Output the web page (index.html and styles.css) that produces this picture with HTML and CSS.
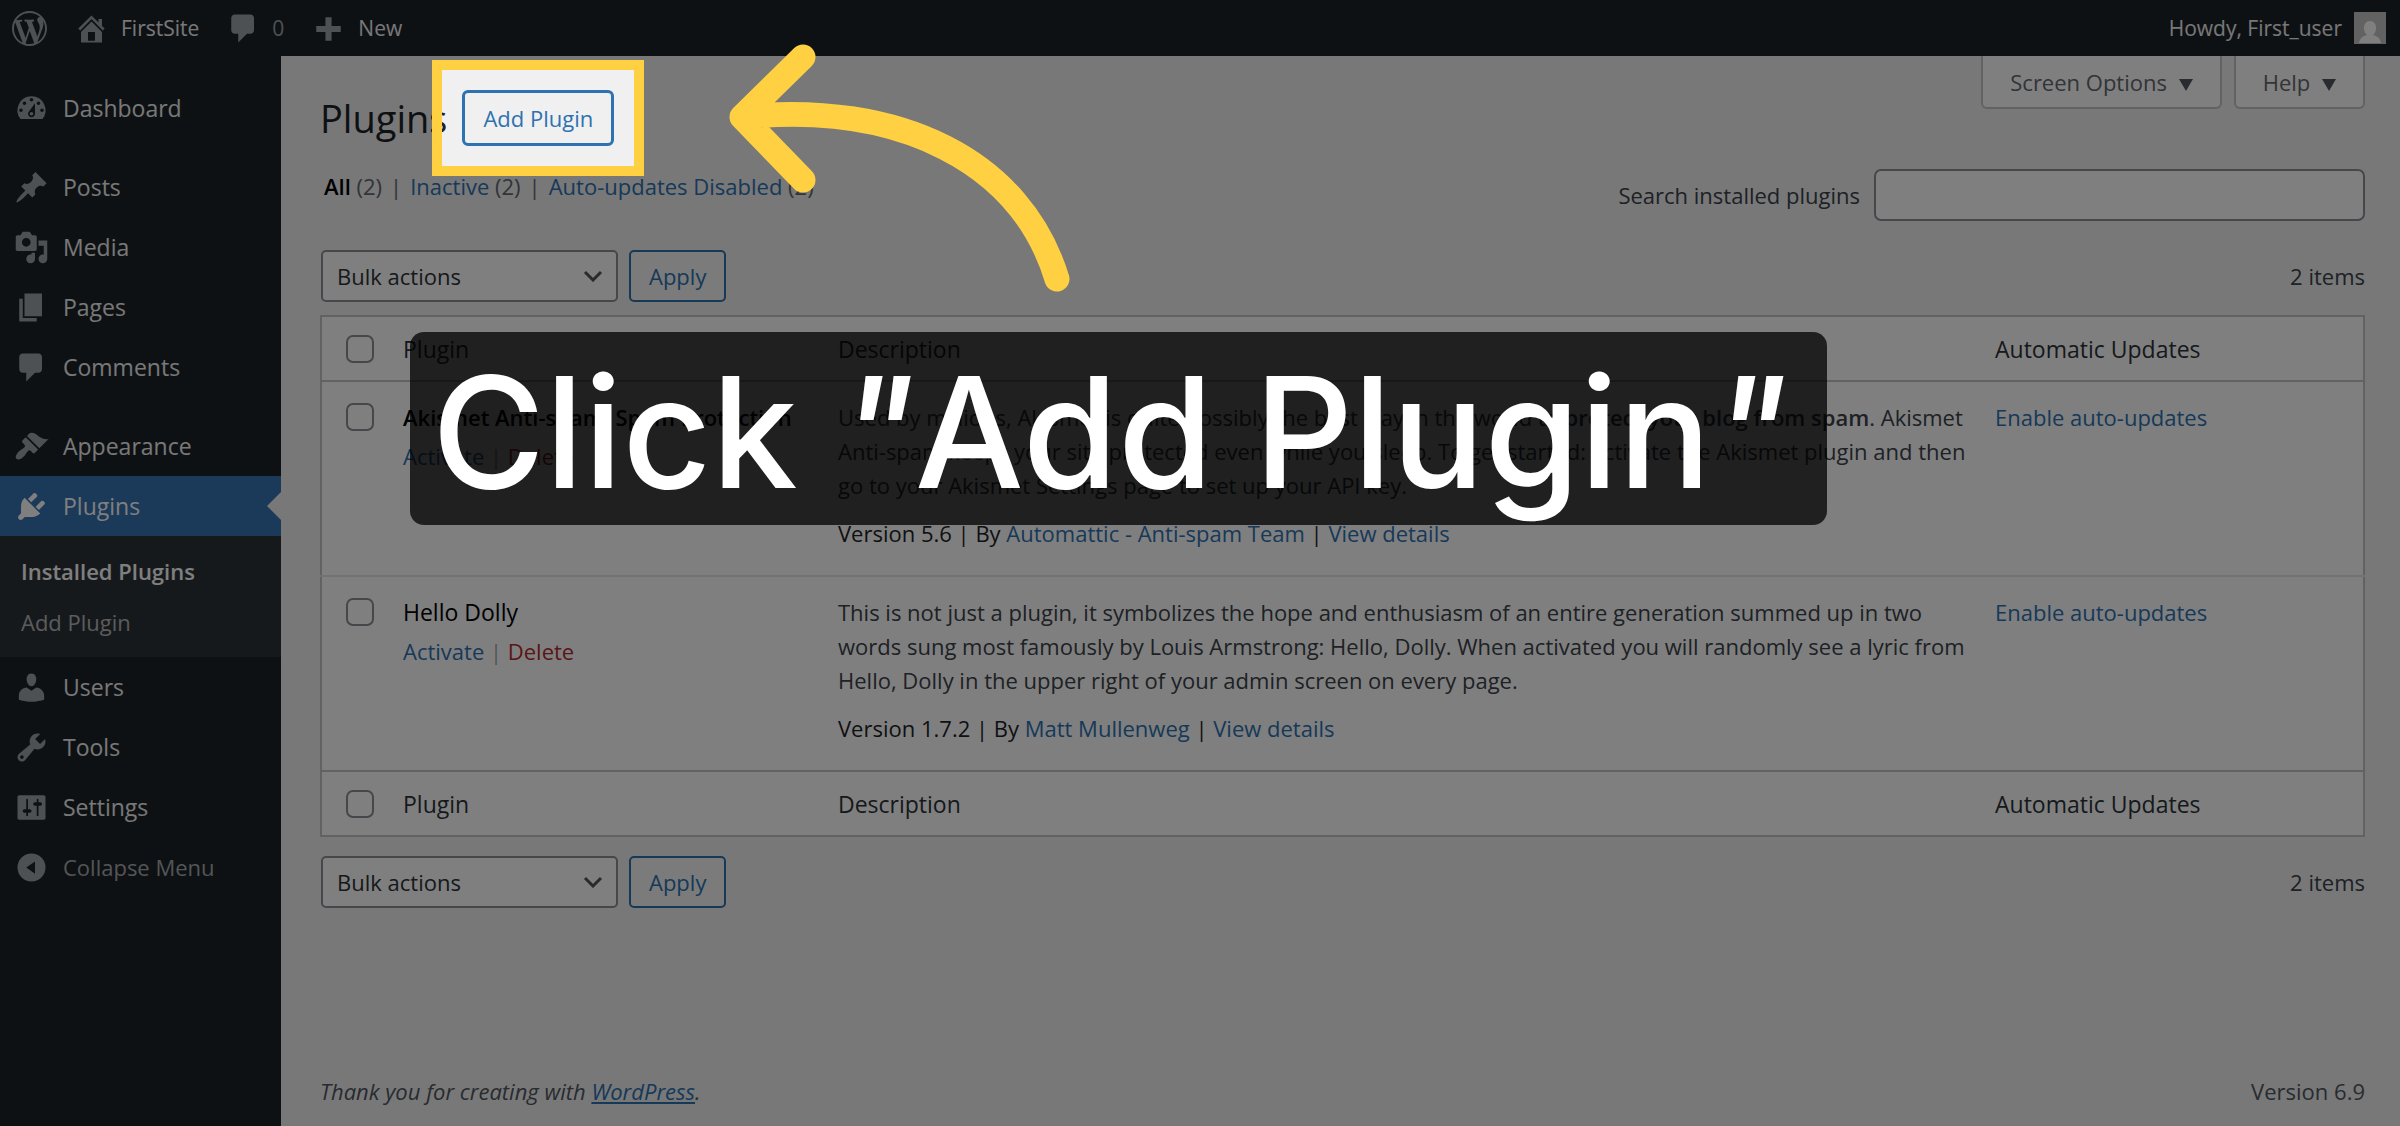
FILE: index.html
```html
<!DOCTYPE html>
<html lang="en">
<head>
    <meta charset="UTF-8">
    <meta name="viewport" content="width=device-width, initial-scale=1.0">
    <title>Plugins - FirstSite</title>
    <link rel="stylesheet" href="styles.css">
</head>
<body>
    <!-- Admin bar -->
    <header class="admin-bar">
        <a class="bar-item bar-logo" href="#" aria-label="About WordPress">
            <svg class="icon" viewBox="0 0 20 20"><path d="M20 10c0-5.51-4.49-10-10-10C4.48 0 0 4.49 0 10c0 5.52 4.48 10 10 10 5.51 0 10-4.48 10-10zM7.78 15.37L4.37 6.22c.55-.02 1.17-.08 1.17-.08.5-.06.44-1.13-.06-1.11 0 0-1.45.11-2.37.11-.18 0-.37 0-.58-.01C4.12 2.69 6.87 1.11 10 1.11c2.33 0 4.45.87 6.05 2.34-.68-.11-1.65.39-1.65 1.58 0 .74.45 1.36.9 2.1.35.61.55 1.36.55 2.46 0 1.49-1.4 5-1.4 5l-3.03-8.37c.54-.02.82-.17.82-.17.5-.05.44-1.25-.06-1.22 0 0-1.44.12-2.38.12-.87 0-2.33-.12-2.33-.12-.5-.03-.56 1.2-.06 1.22l.92.08 1.26 3.41zM17.41 10c.24-.64.74-1.87.43-4.25.7 1.29 1.05 2.71 1.05 4.25 0 3.29-1.73 6.24-4.4 7.78.97-2.59 1.94-5.2 2.92-7.78zM6.1 18.09C3.12 16.65 1.11 13.53 1.11 10c0-1.3.23-2.48.72-3.59C3.25 10.3 4.67 14.2 6.1 18.09zm4.03-6.63l2.58 6.98c-.86.29-1.76.45-2.71.45-.79 0-1.57-.11-2.29-.33.81-2.38 1.62-4.74 2.42-7.1z"/></svg>
        </a>
        <a class="bar-item" href="#">
            <svg class="icon" viewBox="0 0 20 20"><path d="M16 8.5l1.53 1.53-1.06 1.06L10 4.6l-6.47 6.49-1.06-1.06L10 2.5l4 4v-2h2v4zm-6-2.46l6 5.99V18H4v-5.97zM12 17v-5H8v5h4z"/></svg>
            FirstSite
        </a>
        <a class="bar-item bar-comments" href="#">
            <svg class="icon" viewBox="0 0 20 20"><path d="M5 2h9c1.1 0 2 .9 2 2v7c0 1.1-.9 2-2 2h-2l-5 5v-5H5c-1.1 0-2-.9-2-2V4c0-1.1.9-2 2-2z"/></svg>
            <span class="bar-count">0</span>
        </a>
        <a class="bar-item" href="#">
            <svg class="icon" viewBox="0 0 20 20"><path d="M17 8.500v3.500h-5.250v5h-3.500v-5H3V8.500h5.250v-5h3.500v5z"/></svg>
            New
        </a>
        <a class="bar-item bar-account" href="#">
            Howdy, First_user
            <svg class="avatar" viewBox="0 0 32 32"><path class="avatar-bg" d="M0 0h32v32H0z"/><path class="avatar-shape" d="M16 9c4 0 6 3 6 7 0 3-1 5-3 7 4 1 7 3 8 8H5c1-5 4-7 8-8-2-2-3-4-3-7 0-4 2-7 6-7z"/></svg>
        </a>
    </header>

    <div class="page">
        <!-- Sidebar -->
        <nav class="sidebar">
            <a class="menu-item" href="#"><svg class="icon" viewBox="0 0 20 20"><path d="M3.76 16h12.48A7.998 7.998 0 0 0 10 3a7.998 7.998 0 0 0-6.24 13zM10 4c.55 0 1 .45 1 1s-.45 1-1 1-1-.45-1-1 .45-1 1-1zM6 6c.55 0 1 .45 1 1s-.45 1-1 1-1-.45-1-1 .45-1 1-1zm8 0c.55 0 1 .45 1 1s-.45 1-1 1-1-.45-1-1 .45-1 1-1zm-5.370 5.550L12 7v6c0 1.100-.9 2-2 2s-2-.9-2-2c0-.57.24-1.080.63-1.450zM4 10c.55 0 1 .45 1 1s-.45 1-1 1-1-.45-1-1 .45-1 1-1zm12 0c.55 0 1 .45 1 1s-.45 1-1 1-1-.45-1-1 .45-1 1-1zm-5 3c0-.55-.45-1-1-1s-1 .45-1 1 .45 1 1 1 1-.45 1-1z"/></svg>Dashboard</a>
            <div class="menu-gap"></div>
            <a class="menu-item" href="#"><svg class="icon" viewBox="0 0 20 20"><path d="M10.44 3.02l1.82-1.82 6.36 6.35-1.83 1.82c-1.05-.68-2.48-.57-3.41.36l-.75.75c-.92.93-1.04 2.35-.35 3.41l-1.83 1.82-2.41-2.41-2.8 2.79c-.42.42-3.38 2.71-3.8 2.29s1.86-3.39 2.28-3.81l2.79-2.79L4.1 9.36l1.83-1.82c1.05.69 2.48.57 3.4-.36l.75-.75c.93-.92 1.05-2.35.36-3.41z"/></svg>Posts</a>
            <a class="menu-item" href="#"><svg class="icon" viewBox="0 0 20 20"><path d="M13 11V4c0-.55-.45-1-1-1h-1.67L9 1H5L3.67 3H2c-.55 0-1 .45-1 1v7c0 .55.45 1 1 1h10c.55 0 1-.45 1-1zM7 4.5c1.38 0 2.5 1.12 2.5 2.5S8.38 9.5 7 9.5 4.5 8.38 4.5 7 5.62 4.5 7 4.5zM14 6h5v10.5c0 1.38-1.12 2.5-2.5 2.5S14 17.88 14 16.5s1.12-2.5 2.5-2.5c.17 0 .34.02.5.05V9h-3V6zm-4 8.05V13h2v3.5c0 1.38-1.12 2.5-2.5 2.5S7 17.88 7 16.5 8.12 14 9.5 14c.17 0 .34.02.5.05z"/></svg>Media</a>
            <a class="menu-item" href="#"><svg class="icon" viewBox="0 0 20 20"><path d="M6 15V2h10v13H6zm-1 1h8v2H3V5h2v11z"/></svg>Pages</a>
            <a class="menu-item" href="#"><svg class="icon" viewBox="0 0 20 20"><path d="M5 2h9c1.1 0 2 .9 2 2v7c0 1.1-.9 2-2 2h-2l-5 5v-5H5c-1.1 0-2-.9-2-2V4c0-1.1.9-2 2-2z"/></svg>Comments</a>
            <div class="menu-gap"></div>
            <a class="menu-item" href="#"><svg class="icon" viewBox="0 0 20 20"><path d="M14.48 11.06L7.41 3.99l1.5-1.5c.5-.56 2.3-.47 3.51.32 1.21.8 1.43 1.28 2.91 2.1 1.18.64 2.45 1.26 4.45.85zm-.71.71L6.7 4.7 4.93 6.47c-.39.39-.39 1.02 0 1.41l1.06 1.06c.39.39.39 1.03 0 1.42-.6.6-1.43 1.11-2.21 1.69-.35.26-.7.53-1.01.84C1.43 14.23.4 16.08 1.4 17.07c.99 1 2.84-.03 4.18-1.36.31-.31.58-.66.85-1.02.57-.78 1.08-1.61 1.69-2.21.39-.39 1.02-.39 1.41 0l1.06 1.06c.39.39 1.02.39 1.41 0z"/></svg>Appearance</a>
            <a class="menu-item current" href="#"><svg class="icon" viewBox="0 0 20 20"><path d="M13.11 4.36L9.87 7.6 8 5.73l3.24-3.24c.35-.34 1.05-.2 1.56.32.52.51.66 1.21.31 1.55zm-8 1.77l.91-1.12 9.01 9.01-1.19.84c-.71.71-2.63 1.16-3.82 1.16H6.14L4.9 17.26c-.59.59-1.54.59-2.12 0-.59-.58-.59-1.53 0-2.12l1.24-1.24v-3.88c0-1.13.4-3.19 1.09-3.89zm7.26 3.97l3.24-3.24c.34-.35 1.04-.21 1.55.31.52.51.66 1.21.31 1.55l-3.24 3.25z"/></svg>Plugins</a>
            <div class="submenu">
                <a class="active" href="#">Installed Plugins</a>
                <a href="#">Add Plugin</a>
            </div>
            <a class="menu-item" href="#"><svg class="icon" viewBox="0 0 20 20"><path d="M10 9.25c-2.27 0-2.73-3.44-2.73-3.44C7 4.02 7.82 2 9.97 2c2.16 0 2.98 2.02 2.71 3.81 0 0-.41 3.44-2.68 3.44zm0 2.57L12.72 10c2.39 0 4.52 2.33 4.52 4.53v2.49s-3.65 1.13-7.24 1.13c-3.65 0-7.24-1.13-7.24-1.13v-2.49c0-2.25 1.94-4.48 4.47-4.48z"/></svg>Users</a>
            <a class="menu-item" href="#"><svg class="icon" viewBox="0 0 20 20"><path d="M16.68 9.77c-1.34 1.34-3.3 1.67-4.95.99l-5.41 6.52c-.99.99-2.59.99-3.58 0s-.99-2.59 0-3.57l6.52-5.42c-.68-1.65-.35-3.61.99-4.95 1.28-1.28 3.12-1.62 4.72-1.06l-2.89 2.89 2.82 2.82 2.86-2.87c.53 1.58.18 3.39-1.08 4.65zM3.81 16.21c.4.39 1.04.39 1.43 0 .4-.4.4-1.04 0-1.43-.39-.4-1.03-.4-1.43 0-.39.39-.39 1.03 0 1.43z"/></svg>Tools</a>
            <a class="menu-item" href="#"><svg class="icon" viewBox="0 0 20 20"><path d="M18 16V4c0-.55-.45-1-1-1H3c-.55 0-1 .45-1 1v12c0 .55.45 1 1 1h14c.55 0 1-.45 1-1zM8 11h1c.55 0 1 .45 1 1s-.45 1-1 1H8v1.5c0 .28-.22.5-.5.5s-.5-.22-.5-.5V13H6c-.55 0-1-.45-1-1s.45-1 1-1h1V5.5c0-.28.22-.5.5-.5s.5.22.5.5V11zm5-2h-1c-.55 0-1-.45-1-1s.45-1 1-1h1V5.5c0-.28.22-.5.5-.5s.5.22.5.5V7h1c.55 0 1 .45 1 1s-.45 1-1 1h-1v5.5c0 .28-.22.5-.5.5s-.5-.22-.5-.5V9z"/></svg>Settings</a>
            <button class="menu-item collapse" type="button"><svg class="icon" viewBox="0 0 20 20"><path fill-rule="evenodd" d="M10 2a8 8 0 1 1 0 16 8 8 0 0 1 0-16zm2 4.500L7 10l5 3.500z"/></svg>Collapse Menu</button>
        </nav>

        <!-- Content -->
        <main class="content">
            <div class="top-row">
                <div class="heading">
                    <h1>Plugins</h1>
                    <div class="spotlight-target">
                        <button class="btn btn-focus" type="button">Add Plugin</button>
                        <div class="spotlight"></div>
                    </div>
                </div>
                <div class="screen-meta">
                    <button class="meta-tab" type="button">Screen Options <svg class="caret" viewBox="0 0 14 12"><path d="M0 0h14L7 12z"/></svg></button>
                    <button class="meta-tab" type="button">Help <svg class="caret" viewBox="0 0 14 12"><path d="M0 0h14L7 12z"/></svg></button>
                </div>
            </div>

            <div class="filter-row">
                <ul class="filters">
                    <li><a class="selected" href="#">All</a> (2)</li>
                    <li><a href="#">Inactive</a> (2)</li>
                    <li><a href="#">Auto-updates Disabled</a> (2)</li>
                </ul>
                <div class="search">
                    <label for="plugin-search">Search installed plugins</label>
                    <input id="plugin-search" type="search">
                </div>
            </div>

            <div class="tablenav">
                <select class="bulk" aria-label="Select bulk action">
                    <option>Bulk actions</option>
                </select>
                <button class="btn" type="button">Apply</button>
                <span class="item-count">2 items</span>
            </div>

            <table class="plugins">
                <thead>
                    <tr>
                        <th class="col-check"><input type="checkbox" aria-label="Select all"></th>
                        <th class="col-name">Plugin</th>
                        <th class="col-desc">Description</th>
                        <th class="col-auto">Automatic Updates</th>
                    </tr>
                </thead>
                <tbody>
                    <tr>
                        <td><input type="checkbox" aria-label="Select Akismet"></td>
                        <td>
                            <div class="plugin-name strong">Akismet Anti-spam: Spam Protection</div>
                            <div class="actions"><a href="#">Activate</a> | <a class="delete" href="#">Delete</a></div>
                        </td>
                        <td>
                            <p>Used by millions, Akismet is quite possibly the best way in the world to <strong>protect your blog from spam</strong>. Akismet Anti-spam keeps your site protected even while you sleep. To get started: activate the Akismet plugin and then go to your Akismet Settings page to set up your API key.</p>
                            <div class="version">Version 5.6 | By <a href="#">Automattic - Anti-spam Team</a> | <a href="#">View details</a></div>
                        </td>
                        <td><a href="#">Enable auto-updates</a></td>
                    </tr>
                    <tr>
                        <td><input type="checkbox" aria-label="Select Hello Dolly"></td>
                        <td>
                            <div class="plugin-name">Hello Dolly</div>
                            <div class="actions"><a href="#">Activate</a> | <a class="delete" href="#">Delete</a></div>
                        </td>
                        <td>
                            <p>This is not just a plugin, it symbolizes the hope and enthusiasm of an entire generation summed up in two words sung most famously by Louis Armstrong: Hello, Dolly. When activated you will randomly see a lyric from Hello, Dolly in the upper right of your admin screen on every page.</p>
                            <div class="version">Version 1.7.2 | By <a href="#">Matt Mullenweg</a> | <a href="#">View details</a></div>
                        </td>
                        <td><a href="#">Enable auto-updates</a></td>
                    </tr>
                </tbody>
                <tfoot>
                    <tr>
                        <th><input type="checkbox" aria-label="Select all"></th>
                        <th>Plugin</th>
                        <th>Description</th>
                        <th>Automatic Updates</th>
                    </tr>
                </tfoot>
            </table>

            <div class="tablenav">
                <select class="bulk" aria-label="Select bulk action">
                    <option>Bulk actions</option>
                </select>
                <button class="btn" type="button">Apply</button>
                <span class="item-count">2 items</span>
            </div>

            <footer class="footer">
                <em>Thank you for creating with <a href="#">WordPress</a>.</em>
                <span>Version 6.9</span>
            </footer>
        </main>
    </div>

    <!-- Tour overlay -->
    <svg class="tour-arrow" viewBox="0 0 344 252"><path d="M75 14L14 74L75 137M14 74C172 58 293 118 329 236"/></svg>
    <div class="tour-caption">Click <span class="quote">"</span>Add Plugin<span class="quote">"</span></div>
</body>
</html>
```
FILE: styles.css
```css
* { box-sizing: border-box; margin: 0; padding: 0; }
body { font-family: 'Open Sans', sans-serif; font-size: 22px; line-height: 34px; background-color: #f0f0f1; color: #3c434a; min-height: 100vh; display: flex; flex-direction: column; }
a { color: #2f72b0; text-decoration: none; }
button, input, select { font: inherit; }
.icon { width: 35px; height: 35px; fill: #9ca2a7; flex: none; }

/* Admin bar */
.admin-bar { display: flex; align-items: center; height: 56px; padding: 0 14px 0 12px; background: #1d2327; font-size: 21px; }
.bar-item { display: flex; align-items: center; gap: 12px; margin-right: 27px; color: #f0f0f1; }
.bar-comments { gap: 11px; }
.bar-count { color: #9ca2a7; }
.bar-account { margin: 0 0 0 auto; }
.avatar { width: 32px; height: 32px; }
.avatar-bg { fill: #c5c5c5; }
.avatar-shape { fill: #fff; }

/* Sidebar */
.page { display: flex; flex: 1; }
.sidebar { width: 281px; flex: none; padding-top: 22px; background: #1d2327; }
.menu-item { display: flex; align-items: center; gap: 14px; width: 100%; height: 60px; padding-left: 14px; color: #f0f0f1; font-size: 23px; position: relative; }
.menu-gap { height: 19px; }
.current { background: #3672b1; color: #fff; }
.current .icon { fill: #fff; }
.current::after { content: ''; position: absolute; right: 0; top: 16px; border: 14px solid transparent; border-left-width: 0; border-right-color: #f0f0f1; }
.submenu { background: #2c3338; padding: 10px 21px 9px; }
.submenu a { display: block; line-height: 51px; color: #b6b8ba; }
.submenu .active { color: #fff; font-weight: 600; }
.collapse { background: none; border: none; color: #a7aaad; text-align: left; font-size: 22px; }

/* Content */
.content { flex: 1; min-width: 0; display: flex; flex-direction: column; padding: 0 35px 18px 39px; }
.top-row { display: flex; justify-content: space-between; align-items: flex-start; }
.heading { display: flex; align-items: center; gap: 15px; padding-top: 34px; }
h1 { font-size: 38px; font-weight: 400; line-height: 56px; color: #1d2327; }
.spotlight-target { position: relative; }
.spotlight { position: absolute; inset: -30px; border: 10px solid #ffd042; box-shadow: 0 0 0 100vmax rgba(0, 0, 0, 0.5); z-index: 10; pointer-events: none; }
.btn { height: 52px; padding: 0 18px; background: #f6f7f7; color: #2f72b0; border: 2px solid #2f72b0; border-radius: 5px; cursor: pointer; }
.btn-focus { display: block; height: 56px; background: #f0f0f1; border-width: 3px; border-radius: 6px; }
.screen-meta { display: flex; gap: 12px; }
.meta-tab { height: 53px; padding: 0 27px; background: #fff; color: #646970; border: 2px solid #c3c4c7; border-top: none; border-radius: 0 0 6px 6px; }
.caret { width: 14px; height: 12px; margin-left: 6px; fill: #50575e; }
.filter-row { display: flex; justify-content: space-between; align-items: flex-start; margin-top: 23px; }
.filters { display: flex; list-style: none; padding-left: 4px; color: #646970; }
.filters li + li::before { content: '|'; margin: 0 8px; }
.filters .selected { color: #000; font-weight: 600; }
.search { display: flex; align-items: center; gap: 14px; }
.search input { width: 491px; height: 52px; background: #fff; border: 2px solid #8c8f94; border-radius: 7px; padding: 0 14px; }
.tablenav { display: flex; align-items: center; gap: 11px; padding-left: 1px; }
.filter-row + .tablenav { margin: 29px 0 13px; }
.plugins + .tablenav { margin-top: 19px; }
.bulk { appearance: none; width: 297px; height: 52px; padding: 0 14px; color: #2c3338; border: 2px solid #8c8f94; border-radius: 5px; background: #fff url("data:image/svg+xml,%3Csvg xmlns='http://www.w3.org/2000/svg' viewBox='0 0 20 12'%3E%3Cpath d='M2 2l8 8 8-8' fill='none' stroke='%23555' stroke-width='3'/%3E%3C/svg%3E") no-repeat right 13px center / 20px 12px; }
.item-count { margin-left: auto; }

/* Plugin table */
.plugins { width: 100%; table-layout: fixed; border-collapse: collapse; background: #fff; border: 2px solid #c3c4c7; }
.plugins th { height: 65px; text-align: left; font-size: 23px; font-weight: 400; color: #2c3338; vertical-align: middle; }
.plugins td { padding: 18px 12px 25px 0; vertical-align: top; border-top: 2px solid #e4e4e6; }
.plugins thead th { border-bottom: 2px solid #c3c4c7; }
.plugins tfoot th { border-top: 2px solid #c3c4c7; }
.col-check { width: 82px; }
.col-name { width: 435px; }
.col-auto { width: 369px; }
.plugins input { display: block; appearance: none; width: 28px; height: 28px; margin-left: 24px; border: 2px solid #8c8f94; border-radius: 7px; background: #fff; }
.plugins td input { margin-top: 3px; }
.plugin-name { color: #000; font-size: 23px; white-space: nowrap; }
.plugins .strong { font-size: 22px; }
.strong, .plugins strong { font-weight: 600; }
.actions { margin-top: 5px; color: #a7aaad; }
.delete { color: #b32d2e; }
.version { margin-top: 14px; color: #1d2327; }
.footer { display: flex; justify-content: space-between; margin-top: auto; color: #50575e; }
.footer a { text-decoration: underline; }

/* Tour overlay */
.tour-arrow { position: absolute; left: 728px; top: 43px; width: 344px; height: 252px; fill: none; stroke: #ffd042; stroke-width: 25px; stroke-linecap: round; stroke-linejoin: round; z-index: 20; }
.tour-caption { position: absolute; left: 410px; top: 332px; padding: 8px 40px 0 22px; border-radius: 14px; background: rgba(0, 0, 0, 0.75); color: #fff; font-family: Inter, sans-serif; font-size: 154px; font-weight: 500; line-height: 185px; white-space: nowrap; z-index: 20; }
.quote { font-style: italic; }
```
